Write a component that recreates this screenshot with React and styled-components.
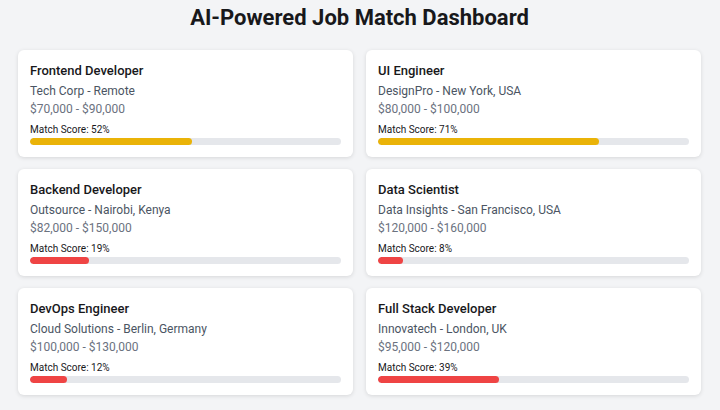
import React from 'react';
import styled, { createGlobalStyle } from 'styled-components';

const jobs = [
  { title: 'Frontend Developer', company: 'Tech Corp', location: 'Remote', salary: '$70,000 - $90,000', score: 52 },
  { title: 'UI Engineer', company: 'DesignPro', location: 'New York, USA', salary: '$80,000 - $100,000', score: 71 },
  { title: 'Backend Developer', company: 'Outsource', location: 'Nairobi, Kenya', salary: '$82,000 - $150,000', score: 19 },
  { title: 'Data Scientist', company: 'Data Insights', location: 'San Francisco, USA', salary: '$120,000 - $160,000', score: 8 },
  { title: 'DevOps Engineer', company: 'Cloud Solutions', location: 'Berlin, Germany', salary: '$100,000 - $130,000', score: 12 },
  { title: 'Full Stack Developer', company: 'Innovatech', location: 'London, UK', salary: '$95,000 - $120,000', score: 39 },
];

const scoreColor = score => {
  if (score >= 80) return '#22c55e';
  if (score >= 50) return '#eab308';
  return '#ef4444';
};

const GlobalStyle = createGlobalStyle`
  body {
    margin: 0;
    background: #f3f4f6;
    font-family: Roboto, "Liberation Sans", sans-serif;
  }
`;

const Page = styled.div`
  padding: 5px 19px 16px 18px;
`;

const Heading = styled.h1`
  margin: 0 0 19px 0;
  text-align: center;
  font-size: 22px;
  line-height: 26px;
  font-weight: 700;
  color: #18181b;
`;

const Grid = styled.div`
  display: grid;
  grid-template-columns: 1fr 1fr;
  column-gap: 13px;
  row-gap: 12px;
`;

const Card = styled.div`
  background: #fff;
  border-radius: 6px;
  padding: 12px;
  box-shadow: 0 1px 4px rgba(0, 0, 0, 0.12);
`;

const JobTitle = styled.h2`
  margin: 0 0 2px 0;
  font-size: 13px;
  line-height: 18px;
  font-weight: 500;
  color: #18181b;
`;

const Company = styled.p`
  margin: 0;
  font-size: 12px;
  line-height: 18px;
  color: #4b5563;
`;

const Salary = styled.p`
  margin: 0 0 5px 0;
  font-size: 12px;
  line-height: 18px;
  color: #6b7280;
`;

const ScoreLabel = styled.div`
  font-size: 10px;
  line-height: 14px;
  color: #18181b;
`;

const Track = styled.div`
  margin-top: 1px;
  height: 7px;
  border-radius: 4px;
  background: #e5e7eb;
  overflow: hidden;
`;

const Fill = styled.div`
  height: 100%;
  border-radius: 4px;
  background: ${p => p.$color};
`;

export default function App() {
  return (
    <Page>
      <GlobalStyle />
      <Heading>AI-Powered Job Match Dashboard</Heading>
      <Grid>
        {jobs.map(job => (
          <Card key={job.title}>
            <JobTitle>{job.title}</JobTitle>
            <Company>{job.company} - {job.location}</Company>
            <Salary>{job.salary}</Salary>
            <ScoreLabel>Match Score: {job.score}%</ScoreLabel>
            <Track>
              <Fill $color={scoreColor(job.score)} style={{ width: `${job.score}%` }} />
            </Track>
          </Card>
        ))}
      </Grid>
    </Page>
  );
}
